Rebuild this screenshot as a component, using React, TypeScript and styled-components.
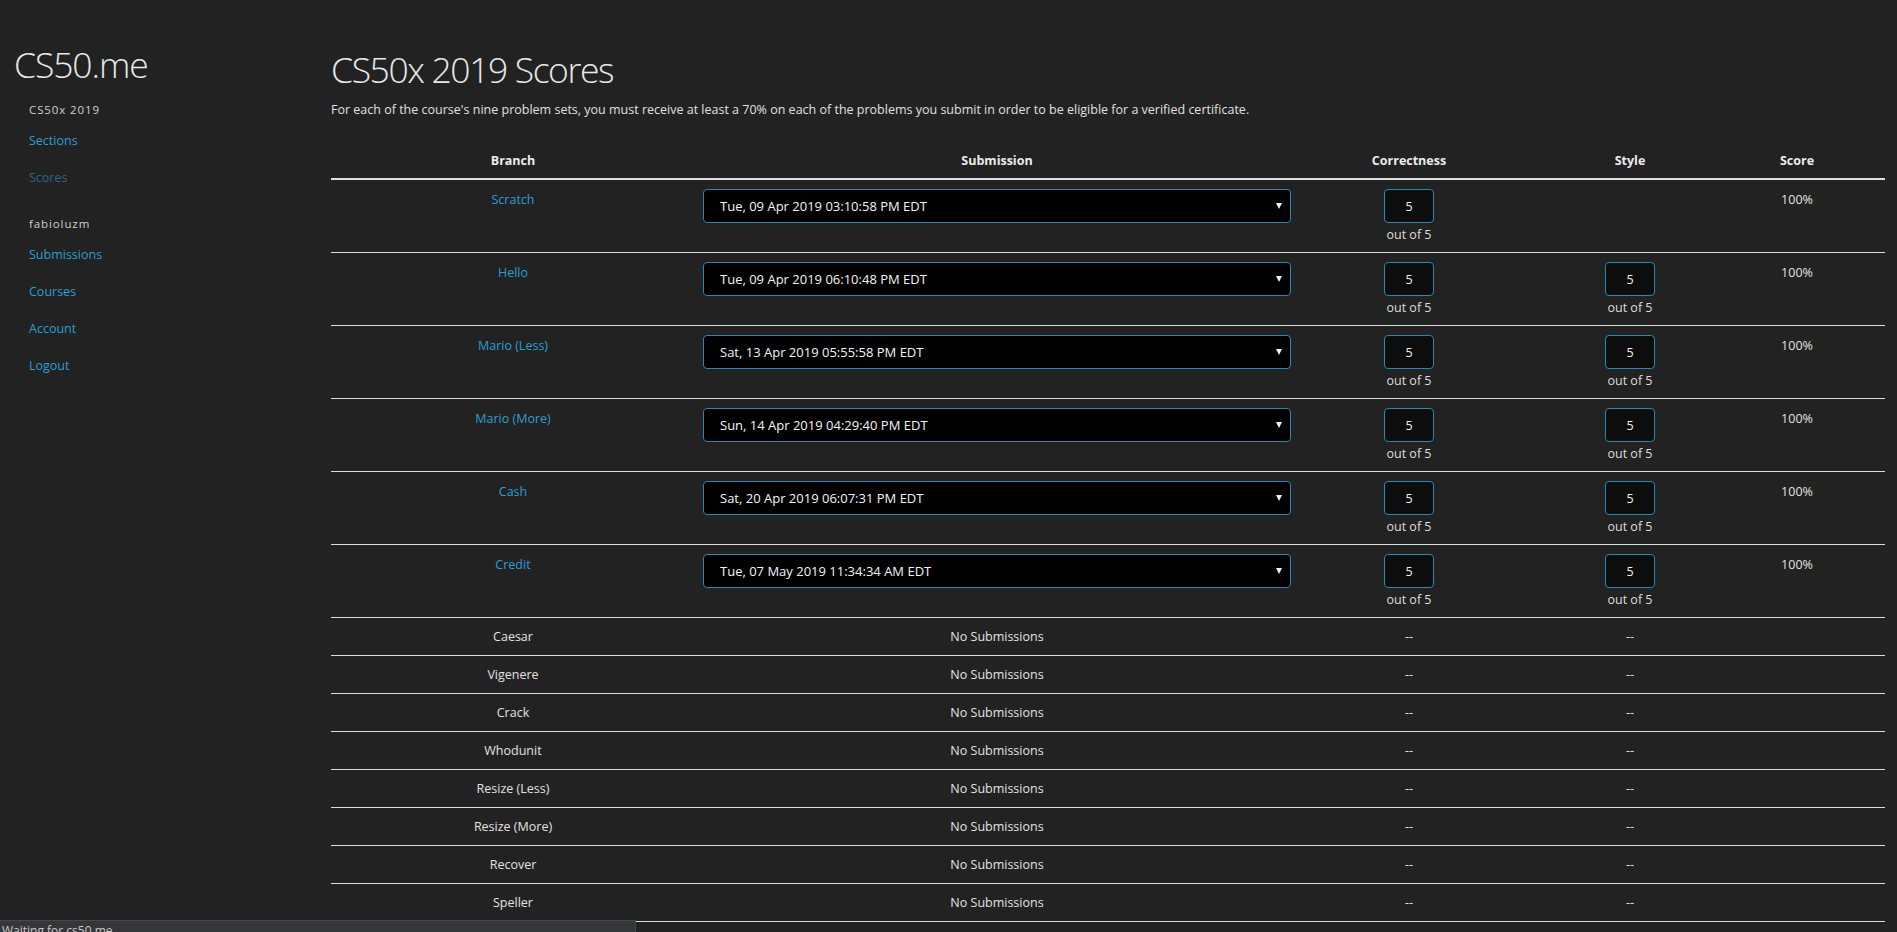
import React from "react";
import styled, { createGlobalStyle } from "styled-components";

const GlobalStyle = createGlobalStyle`
  html, body {
    margin: 0;
    padding: 0;
    background: #222222;
    color: #dddddd;
    font-family: "Open Sans", "Noto Sans", sans-serif;
    font-size: 12.5px;
  }
  * { box-sizing: border-box; }
`;

const Page = styled.div`
  display: grid;
  grid-template-columns: 331px 1fr;
  min-height: 932px;
`;

const Sidebar = styled.nav`
  padding: 44px 0 0 14px;
  display: flex;
  flex-direction: column;
`;

const Brand = styled.div`
  font-size: 35.5px;
  line-height: 40px;
  font-weight: 300;
  letter-spacing: -1.1px;
  color: #e8e8e8;
  margin-bottom: 12.5px;
`;

const NavGroup = styled.div<{ $gap?: number }>`
  display: flex;
  flex-direction: column;
  padding-left: 15px;
  margin-top: ${(p) => p.$gap ?? 0}px;
`;

const NavHeader = styled.div`
  font-size: 11.5px;
  line-height: 25px;
  letter-spacing: 0.9px;
  color: #cfcfcf;
`;

const NavLink = styled.a<{ $active?: boolean }>`
  display: block;
  line-height: 37px;
  font-size: 12.5px;
  color: ${(p) => (p.$active ? "#2d6486" : "#2a9fd6")};
  text-decoration: none;
`;

const Main = styled.main`
  padding: 49px 12px 0 0;
`;

const Title = styled.h1`
  margin: 0 0 11px;
  font-size: 35.5px;
  line-height: 40px;
  font-weight: 300;
  letter-spacing: -1.4px;
  color: #e8e8e8;
`;

const Lead = styled.p`
  margin: 0 0 22px;
  line-height: 20px;
  color: #e0e0e0;
`;

const Table = styled.table`
  width: 100%;
  border-collapse: collapse;
  table-layout: fixed;
`;

const Col = styled.col<{ $w: number }>`
  width: ${(p) => p.$w}px;
`;

const Th = styled.th<{ $pr?: number }>`
  padding: 9px 8px 7px 8px;
  padding-right: ${(p) => 8 + (p.$pr ?? 0)}px;
  line-height: 20px;
  font-weight: 700;
  font-size: 12.5px;
  color: #ececec;
  text-align: center;
  border-bottom: 2px solid #dedede;
`;

const Row = styled.tr``;

const Td = styled.td<{ $tall?: boolean; $pr?: number }>`
  padding: ${(p) => (p.$tall ? "10px 8px 8px" : "8px 8px")};
  padding-right: ${(p) => 8 + (p.$pr ?? 0)}px;
  line-height: ${(p) => (p.$tall ? "20px" : "21px")};
  text-align: center;
  vertical-align: top;
  border-bottom: 1px solid #dcdcdc;
  color: #e2e2e2;
`;

const BranchLink = styled.a`
  color: #2a9fd6;
  text-decoration: none;
`;

const SelectWrap = styled.div`
  position: relative;
  margin-top: -1px;
  &::after {
    content: "";
    position: absolute;
    right: 9px;
    top: 14px;
    border-left: 3.5px solid transparent;
    border-right: 3.5px solid transparent;
    border-top: 6px solid #f2f2f2;
    pointer-events: none;
  }
`;

const Select = styled.select`
  appearance: none;
  -webkit-appearance: none;
  display: block;
  width: 100%;
  height: 34px;
  padding: 0 16px;
  background: #000;
  color: #f4f4f4;
  border: 1px solid #2787b5;
  border-radius: 4px;
  font-family: "Open Sans", "Noto Sans", sans-serif;
  font-size: 13px;
  outline: none;
`;

const ScoreBox = styled.input`
  display: block;
  margin: -1px auto 0;
  width: 50px;
  height: 34px;
  background: #0d0d0d;
  color: #f2f2f2;
  border: 1px solid #2787b5;
  border-radius: 4px;
  text-align: center;
  font-family: "Open Sans", "Noto Sans", sans-serif;
  font-size: 12.5px;
  outline: none;
`;

const OutOf = styled.div`
  color: #dedede;
  line-height: 22px;
  margin-top: 1px;
  margin-bottom: -2px;
`;

const StatusBubble = styled.div`
  position: fixed;
  left: 0;
  bottom: -10px;
  width: 636px;
  height: 22px;
  background: #35363a;
  border-top: 1px solid #46474b;
  border-right: 1px solid #46474b;
  color: #c9c9c9;
  font-family: "Open Sans", "Noto Sans", sans-serif;
  font-size: 12px;
  line-height: 20px;
  padding-left: 2px;
`;

type Sub = {
  name: string;
  date: string;
  style: boolean;
};

const submitted: Sub[] = [
  { name: "Scratch", date: "Tue, 09 Apr 2019 03:10:58 PM EDT", style: false },
  { name: "Hello", date: "Tue, 09 Apr 2019 06:10:48 PM EDT", style: true },
  { name: "Mario (Less)", date: "Sat, 13 Apr 2019 05:55:58 PM EDT", style: true },
  { name: "Mario (More)", date: "Sun, 14 Apr 2019 04:29:40 PM EDT", style: true },
  { name: "Cash", date: "Sat, 20 Apr 2019 06:07:31 PM EDT", style: true },
  { name: "Credit", date: "Tue, 07 May 2019 11:34:34 AM EDT", style: true },
];

const empty = [
  "Caesar",
  "Vigenere",
  "Crack",
  "Whodunit",
  "Resize (Less)",
  "Resize (More)",
  "Recover",
  "Speller",
];

const Score = ({ value }: { value: string }) => (
  <>
    <ScoreBox value={value} readOnly />
    <OutOf>out of 5</OutOf>
  </>
);

export default function App() {
  return (
    <>
      <GlobalStyle />
      <Page>
        <Sidebar>
          <Brand>CS50.me</Brand>
          <NavGroup>
            <NavHeader>CS50x 2019</NavHeader>
            <NavLink href="#">Sections</NavLink>
            <NavLink href="#" $active>
              Scores
            </NavLink>
          </NavGroup>
          <NavGroup $gap={15}>
            <NavHeader>fabioluzm</NavHeader>
            <NavLink href="#">Submissions</NavLink>
            <NavLink href="#">Courses</NavLink>
            <NavLink href="#">Account</NavLink>
            <NavLink href="#">Logout</NavLink>
          </NavGroup>
        </Sidebar>
        <Main>
          <Title>CS50x 2019 Scores</Title>
          <Lead>
            For each of the course's nine problem sets, you must receive at least a 70% on each of
            the problems you submit in order to be eligible for a verified certificate.
          </Lead>
          <Table>
            <colgroup>
              <Col $w={364} />
              <Col $w={604} />
              <Col $w={220} />
              <Col $w={222} />
              <Col $w={144} />
            </colgroup>
            <thead>
              <tr>
                <Th>Branch</Th>
                <Th>Submission</Th>
                <Th>Correctness</Th>
                <Th>Style</Th>
                <Th $pr={32}>Score</Th>
              </tr>
            </thead>
            <tbody>
              {submitted.map((s) => (
                <Row key={s.name}>
                  <Td $tall>
                    <BranchLink href="#">{s.name}</BranchLink>
                  </Td>
                  <Td $tall>
                    <SelectWrap>
                      <Select defaultValue={s.date}>
                        <option>{s.date}</option>
                      </Select>
                    </SelectWrap>
                  </Td>
                  <Td $tall>
                    <Score value="5" />
                  </Td>
                  <Td $tall>{s.style ? <Score value="5" /> : null}</Td>
                  <Td $tall $pr={32}>
                    100%
                  </Td>
                </Row>
              ))}
              {empty.map((name) => (
                <Row key={name}>
                  <Td>{name}</Td>
                  <Td>No Submissions</Td>
                  <Td>--</Td>
                  <Td>--</Td>
                  <Td $pr={32}></Td>
                </Row>
              ))}
            </tbody>
          </Table>
        </Main>
      </Page>
      <StatusBubble>Waiting for cs50.me</StatusBubble>
    </>
  );
}
